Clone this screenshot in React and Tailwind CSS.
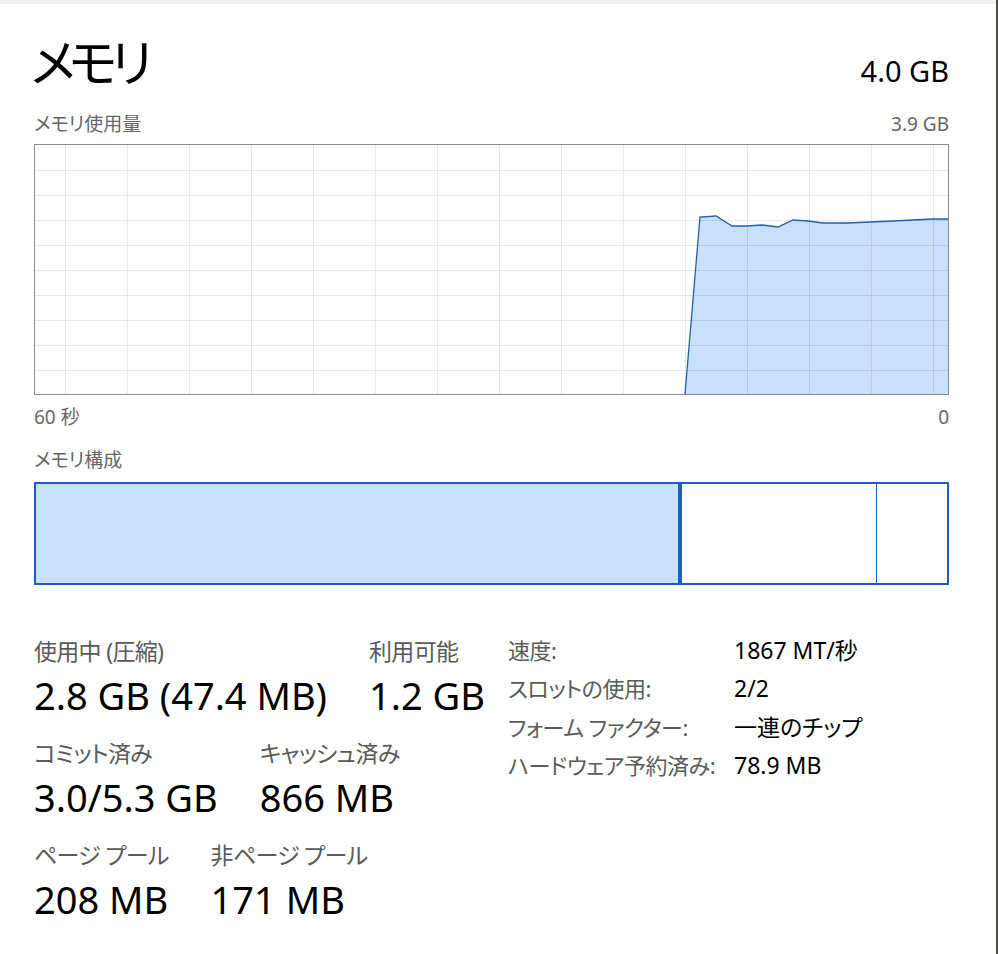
import React from 'react';

// points of the usage line, in chart-inner pixels (913 x 249)
const usage = [
  [650, 249], [665, 72], [681, 71], [697, 81], [712, 81], [727, 80], [743, 82],
  [758, 75], [773, 76], [788, 78], [812, 78], [836, 77], [858, 76], [898, 74], [913, 74],
];

function UsageChart() {
  const line = usage.map(([x, y]) => `${x},${y}`).join(' ');
  const area = `${line} 913,249 650,249`;
  const cols = Array.from({ length: 15 }, (_, i) => 30 + i * 62);
  const rows = Array.from({ length: 9 }, (_, i) => 25 + i * 25);

  return (
    <div className="h-[251px] border border-[#8a8a8a] bg-white">
      <svg width="913" height="249" viewBox="0 0 913 249" className="block">
        <polygon points={area} fill="#cadffa" />
        {cols.map((x) => (
          <line key={`c${x}`} x1={x + 0.5} y1="0" x2={x + 0.5} y2="249" stroke="rgba(0,0,0,0.09)" strokeWidth="1" />
        ))}
        {rows.map((y) => (
          <line key={`r${y}`} x1="0" y1={y + 0.5} x2="913" y2={y + 0.5} stroke="rgba(0,0,0,0.09)" strokeWidth="1" />
        ))}
        <polyline points={line} fill="none" stroke="#2160ab" strokeWidth="1.3" />
      </svg>
    </div>
  );
}

function Stat({ label, value }) {
  return (
    <div className="flex flex-col">
      <span className="text-[23px] leading-[30px] tracking-[-0.03em] text-[#5a5a5a] whitespace-nowrap">{label}</span>
      <span className="text-[38px] leading-[58px] text-black whitespace-nowrap">{value}</span>
    </div>
  );
}

const details = [
  ['速度:', '1867 MT/秒'],
  ['スロットの使用:', '2/2'],
  ['フォーム ファクター:', '一連のチップ'],
  ['ハードウェア予約済み:', '78.9 MB'],
];

export default function App() {
  return (
    <div className="w-[998px] h-[954px] bg-white flex font-['Noto_Sans','Noto_Sans_CJK_JP',sans-serif] [font-feature-settings:'palt']">
      <div className="flex-1 flex flex-col">
        <div className="h-[4px] bg-[#f0f0f0]" />

        <div className="pl-[34px] pr-[47px] flex flex-col">
          {/* ── Header ── */}
          <div className="mt-[26px] flex items-baseline justify-between">
            <h1 className="m-0 -ml-[3px] text-[51px] leading-[64px] font-normal tracking-[-0.13em] text-black">メモリ</h1>
            <span className="text-[29px] text-black">4.0 GB</span>
          </div>

          <div className="mt-[18px] flex items-baseline justify-between text-[#666666] leading-[24px]">
            <span className="text-[19px]">メモリ使用量</span>
            <span className="text-[19px]">3.9 GB</span>
          </div>

          <div className="mt-[8px]">
            <UsageChart />
          </div>

          <div className="mt-[10px] flex items-baseline justify-between text-[#666666] leading-[24px] text-[19px]">
            <span>60 秒</span>
            <span>0</span>
          </div>

          <div className="mt-[19px] text-[19px] leading-[24px] text-[#666666]">メモリ構成</div>

          {/* ── Composition bar ── */}
          <div className="mt-[10px] h-[103px] border-2 border-[#1d5fbf] flex">
            <div className="w-[646px] bg-[#cadffa] border-r-4 border-[#1d5fbf]" />
            <div className="w-[195px] border-r border-[#1d5fbf]" />
            <div className="flex-1" />
          </div>

          {/* ── Stats ── */}
          <div className="mt-[46px] flex">
            <div className="w-[474px] pt-[5px] flex flex-col gap-[14px]">
              <div className="flex gap-[42px]">
                <Stat label="使用中 (圧縮)" value="2.8 GB (47.4 MB)" />
                <Stat label="利用可能" value="1.2 GB" />
              </div>
              <div className="flex gap-[42px]">
                <Stat label="コミット済み" value="3.0/5.3 GB" />
                <Stat label="キャッシュ済み" value="866 MB" />
              </div>
              <div className="flex gap-[42px]">
                <Stat label="ページ プール" value="208 MB" />
                <Stat label="非ページ プール" value="171 MB" />
              </div>
            </div>

            <div className="grid grid-cols-[226px_auto] text-[22px] leading-[38.4px] content-start">
              {details.map(([k, v]) => (
                <React.Fragment key={k}>
                  <span className="text-[#5a5a5a] tracking-[-0.02em] whitespace-nowrap">{k}</span>
                  <span className="text-black text-[23px] whitespace-nowrap">{v}</span>
                </React.Fragment>
              ))}
            </div>
          </div>
        </div>
      </div>
      <div className="w-[2px] bg-[#4d4d45]" />
    </div>
  );
}
